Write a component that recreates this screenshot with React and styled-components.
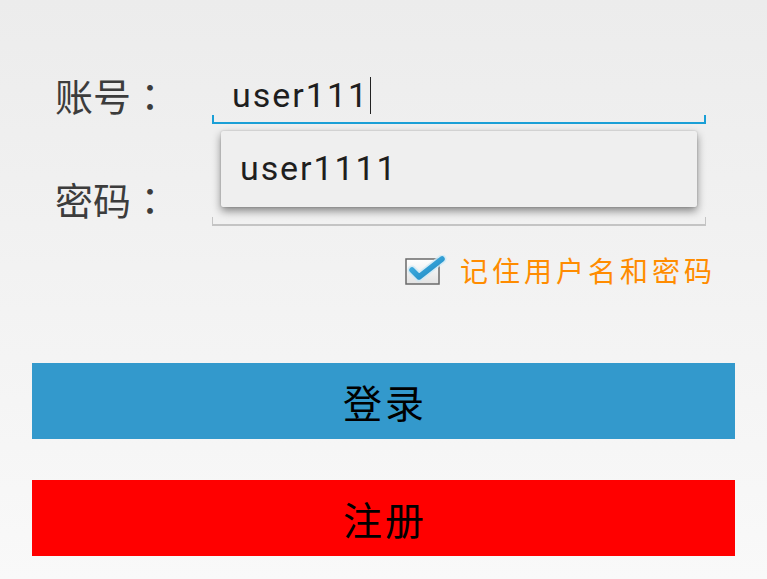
import React from "react";
import styled, { createGlobalStyle } from "styled-components";

const GlobalStyle = createGlobalStyle`
  html, body {
    margin: 0;
    padding: 0;
  }
  body {
    font-family: Roboto, "Noto Sans CJK SC", sans-serif;
  }
`;

const Screen = styled.div`
  width: 767px;
  height: 579px;
  overflow: hidden;
  background: linear-gradient(#ececec, #f9f9f9);
  display: flex;
  flex-direction: column;
`;

const Form = styled.div`
  padding: 70px 61px 0 55px;
  display: flex;
  flex-direction: column;
  gap: 48px;
`;

const Row = styled.div`
  position: relative;
  display: flex;
  align-items: flex-end;
  height: 54px;
`;

const Label = styled.div`
  width: 157px;
  align-self: center;
  margin-top: ${(p) => p.$offset || 0}px;
  font-family: "Noto Sans CJK SC", sans-serif;
  font-size: 38px;
  line-height: 1;
  color: #3c3c3c;
`;

const Colon = styled.span`
  font-family: "Noto Sans CJK TC", sans-serif;
`;

const Field = styled.div`
  flex: 1;
  height: 100%;
  display: flex;
  align-items: center;
  padding: 0 0 2px 18px;
  box-sizing: border-box;
  border-bottom: 2px solid ${(p) => (p.$focused ? "#1a9fd6" : "#c4c4c4")};
  border-left: ${(p) => (p.$focused ? "2px solid #1a9fd6" : "1px solid #c4c4c4")};
  border-right: ${(p) => (p.$focused ? "2px solid #1a9fd6" : "1px solid #c4c4c4")};
  border-image: linear-gradient(
      to bottom,
      transparent 85%,
      ${(p) => (p.$focused ? "#1a9fd6" : "#c4c4c4")} 85%
    )
    1;
`;

const Value = styled.span`
  font-family: Roboto, sans-serif;
  font-size: 34px;
  color: #1e1e1e;
  letter-spacing: 2px;
`;

const Cursor = styled.span`
  display: inline-block;
  width: 1px;
  height: 37px;
  margin-left: 1px;
  background: #222;
  vertical-align: middle;
`;

const Suggest = styled.div`
  position: absolute;
  left: 166px;
  top: 61px;
  width: 476px;
  height: 76px;
  background: #efefef;
  border-radius: 2px;
  box-shadow: 0 4px 8px rgba(0, 0, 0, 0.45), 0 0 2px rgba(0, 0, 0, 0.2);
  display: flex;
  align-items: center;
  padding: 0 0 2px 19px;
  box-sizing: border-box;
  font-family: Roboto, sans-serif;
  font-size: 34px;
  color: #1e1e1e;
  letter-spacing: 1.9px;
  z-index: 2;
`;

const Remember = styled.div`
  display: flex;
  justify-content: flex-end;
  align-items: center;
  gap: 13px;
  padding: 28px 51px 0 0;
  font-family: "Noto Sans CJK SC", sans-serif;
  font-size: 28px;
  line-height: 32px;
  color: #ff8c00;
  letter-spacing: 4px;
`;

const Buttons = styled.div`
  display: flex;
  flex-direction: column;
  gap: 41px;
  padding: 77px 32px 0;
`;

const Button = styled.div`
  height: 76px;
  background: ${(p) => p.$bg};
  display: flex;
  align-items: center;
  justify-content: center;
  padding-left: 3px;
  font-family: "Noto Sans CJK SC", sans-serif;
  font-size: 39px;
  color: #000;
  letter-spacing: 3px;
`;

const CheckIcon = () => (
  <svg width="42" height="30" viewBox="0 0 42 30">
    <defs>
      <linearGradient id="box" x1="0" y1="0" x2="0" y2="1">
        <stop offset="0" stopColor="#ffffff" />
        <stop offset="1" stopColor="#e2e2e2" />
      </linearGradient>
      <linearGradient id="tick" x1="0" y1="0" x2="1" y2="1">
        <stop offset="0" stopColor="#47b4e6" />
        <stop offset="1" stopColor="#1a86c0" />
      </linearGradient>
    </defs>
    <rect x="1" y="4" width="33" height="25" fill="url(#box)" stroke="#6a6a6a" strokeWidth="1.5" />
    <path
      d="M7 15 L14 22 L37 4"
      fill="none"
      stroke="#cde9f5"
      strokeWidth="9"
      strokeLinecap="round"
      strokeLinejoin="round"
      opacity="0.8"
    />
    <path
      d="M7 15 L14 22 L37 4"
      fill="none"
      stroke="url(#tick)"
      strokeWidth="5.5"
      strokeLinecap="round"
      strokeLinejoin="round"
    />
  </svg>
);

export default function App() {
  return (
    <Screen>
      <GlobalStyle />
      <Form>
        <Row>
          <Label $offset={-5}>
            账号<Colon>：</Colon>
          </Label>
          <Field $focused>
            <Value>user111</Value>
            <Cursor />
          </Field>
          <Suggest>user1111</Suggest>
        </Row>
        <Row>
          <Label $offset={-1}>
            密码<Colon>：</Colon>
          </Label>
          <Field />
        </Row>
      </Form>
      <Remember>
        <CheckIcon />
        <span>记住用户名和密码</span>
      </Remember>
      <Buttons>
        <Button $bg="#3399cc">登录</Button>
        <Button $bg="#ff0000">注册</Button>
      </Buttons>
    </Screen>
  );
}
